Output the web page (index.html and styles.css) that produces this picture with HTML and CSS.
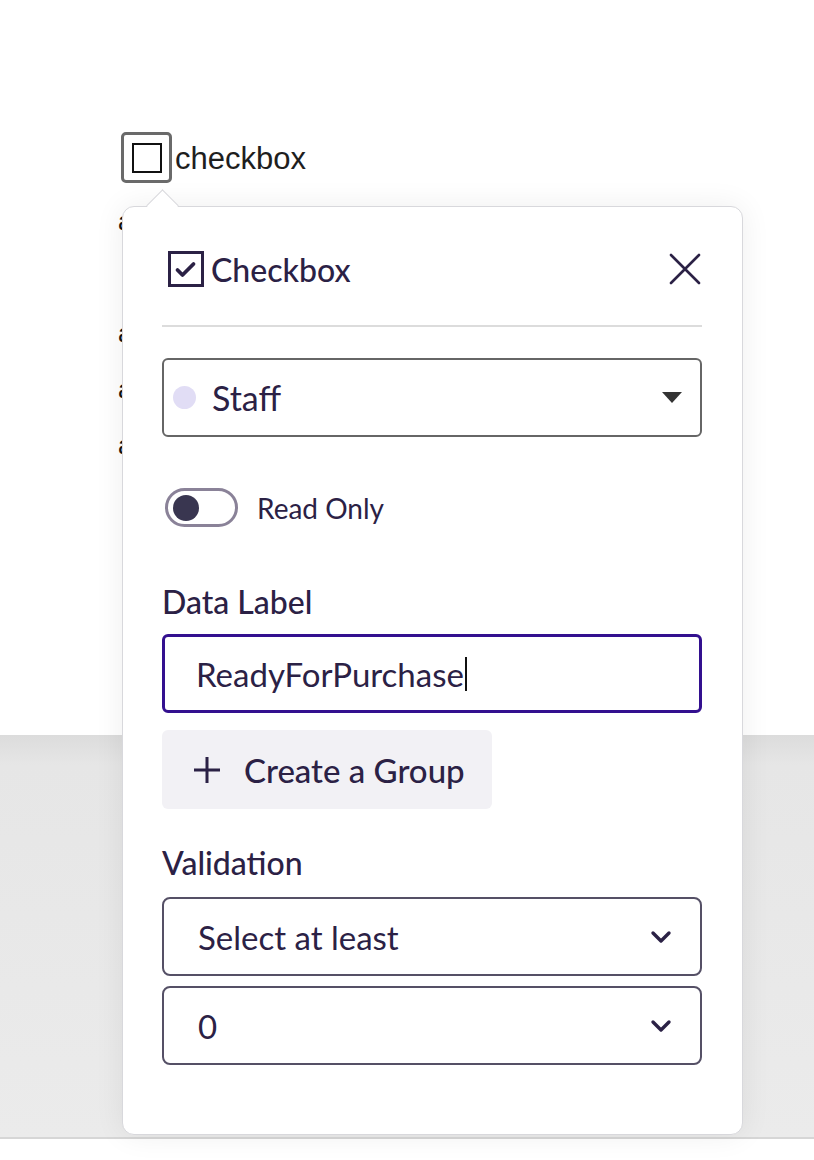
FILE: index.html
```html
<!DOCTYPE html>
<html lang="en">
<head>
    <meta charset="UTF-8">
    <meta name="viewport" content="width=device-width, initial-scale=1.0">
    <title>Checkbox field</title>
    <link rel="stylesheet" href="styles.css">
</head>
<body>
    <div class="doc">
        <div class="doc-top">
            <div class="field-row">
                <span class="field-box"><span class="field-box-inner"></span></span>
                <span class="field-text">checkbox</span>
            </div>
            <div class="behind-line first">a</div>
            <div class="behind-line">a</div>
            <div class="behind-line">a</div>
            <div class="behind-line">a</div>
        </div>
        <div class="doc-sheet"></div>
    </div>

    <div class="popover">
        <div class="popover-arrow"></div>
        <div class="popover-head">
            <svg class="head-icon" width="36" height="36" viewBox="0 0 36 36">
                <rect x="1.5" y="1.5" width="33" height="33" fill="none" stroke="#2b2145" stroke-width="3"/>
                <path d="M9.5 19 L14.5 24 L25.5 13" fill="none" stroke="#2b2145" stroke-width="3.8" stroke-linecap="round" stroke-linejoin="round"/>
            </svg>
            <span class="head-title">Checkbox</span>
            <svg class="close-icon" width="34" height="32" viewBox="0 0 34 32">
                <path d="M3 2 L31 30 M31 2 L3 30" stroke="#2b2145" stroke-width="2.6" stroke-linecap="round"/>
            </svg>
        </div>
        <div class="divider"></div>

        <div class="select select-role">
            <span class="role-dot"></span>
            <span class="select-text">Staff</span>
            <svg class="caret-down" width="20" height="11" viewBox="0 0 20 11">
                <path d="M0 0 H20 L10 11 Z" fill="#333"/>
            </svg>
        </div>

        <div class="toggle-row">
            <span class="toggle"><span class="toggle-knob"></span></span>
            <span class="toggle-label">Read Only</span>
        </div>

        <div class="section-label label-data">Data Label</div>
        <div class="text-input">ReadyForPurchase<span class="cursor"></span></div>

        <div class="group-btn">
            <svg width="30" height="30" viewBox="0 0 30 30">
                <path d="M15 2 V28 M2 15 H28" stroke="#2b2145" stroke-width="3"/>
            </svg>
            <span>Create a Group</span>
        </div>

        <div class="section-label label-validation">Validation</div>
        <div class="select select-plain">
            <span class="select-text">Select at least</span>
            <svg class="chevron" width="22" height="14" viewBox="0 0 22 14">
                <path d="M3 3 L11 11 L19 3" fill="none" stroke="#2b2145" stroke-width="3.4" stroke-linecap="round" stroke-linejoin="round"/>
            </svg>
        </div>
        <div class="select select-plain second">
            <span class="select-text">0</span>
            <svg class="chevron" width="22" height="14" viewBox="0 0 22 14">
                <path d="M3 3 L11 11 L19 3" fill="none" stroke="#2b2145" stroke-width="3.4" stroke-linecap="round" stroke-linejoin="round"/>
            </svg>
        </div>
    </div>
</body>
</html>
```

FILE: styles.css
```css
body {
    margin: 0;
    background: #ffffff;
    font-family: Lato, "Noto Sans", sans-serif;
    color: #2b2145;
}
.doc-top {
    height: 735px;
    background: #ffffff;
    padding: 132px 0 0 118px;
    box-sizing: border-box;
}
.doc-sheet {
    height: 402px;
    background: linear-gradient(#dcdcdc, #e6e6e6 30px, #ebebeb);
    border-bottom: 2px solid #d6d6d6;
}
.field-row {
    display: flex;
    align-items: center;
    height: 51px;
    padding-left: 3px;
}
.field-box {
    width: 51px;
    height: 51px;
    box-sizing: border-box;
    border: 3px solid #6a6a6a;
    border-radius: 5px;
    display: flex;
    align-items: center;
    justify-content: center;
}
.field-box-inner {
    width: 30px;
    height: 30px;
    box-sizing: border-box;
    border: 2px solid #111;
}
.field-text {
    font-family: "Liberation Sans", Arial, sans-serif;
    font-size: 31px;
    color: #1e1e1e;
    margin-left: 3px;
    position: relative;
    top: 1px;
}
.behind-line {
    font-family: "Liberation Sans", Arial, sans-serif;
    font-size: 26px;
    line-height: 56px;
    color: #111;
}
.behind-line.first {
    margin-top: 10px;
    margin-bottom: 56px;
}

.popover {
    position: absolute;
    left: 122px;
    top: 206px;
    width: 621px;
    height: 929px;
    box-sizing: border-box;
    background: #fff;
    border: 1px solid #d8d8dc;
    border-radius: 12px;
    box-shadow: 0 0 30px rgba(0, 0, 0, 0.07);
    padding: 42px 40px 0 39px;
}
.popover-arrow {
    position: absolute;
    left: 28px;
    top: -13px;
    width: 22px;
    height: 22px;
    background: #fff;
    border-left: 1px solid #d8d8dc;
    border-top: 1px solid #d8d8dc;
    transform: rotate(45deg);
}
.popover-head {
    display: flex;
    align-items: center;
    height: 40px;
}
.head-icon {
    margin-left: 6px;
}
.head-title {
    font-size: 32px;
    font-weight: 500;
    margin-left: 7px;
    flex: 1;
}
.divider {
    height: 2px;
    background: #dcdcdc;
    margin-top: 36px;
}
.select {
    height: 79px;
    box-sizing: border-box;
    border: 2px solid #666;
    border-radius: 6px;
    display: flex;
    align-items: center;
}
.select-role {
    margin-top: 31px;
    padding: 0 18px 0 9px;
}
.role-dot {
    width: 23px;
    height: 23px;
    border-radius: 50%;
    background: #e1ddf5;
}
.select-text {
    font-size: 33px;
    flex: 1;
    margin-left: 17px;
}
.select-role .select-text {
    font-size: 34px;
    margin-left: 16px;
}
.toggle-row {
    display: flex;
    align-items: center;
    margin-top: 51px;
    height: 39px;
    padding-left: 3px;
}
.toggle {
    width: 73px;
    height: 39px;
    box-sizing: border-box;
    border: 3px solid #8a8298;
    border-radius: 20px;
    display: flex;
    align-items: center;
    padding-left: 5px;
}
.toggle-knob {
    width: 26px;
    height: 26px;
    border-radius: 50%;
    background: #393650;
}
.toggle-label {
    font-size: 28px;
    margin-left: 19px;
}
.section-label {
    font-size: 32px;
    font-weight: 500;
    line-height: 36px;
}
.label-data {
    margin-top: 57px;
}
.text-input {
    margin-top: 14px;
    height: 79px;
    box-sizing: border-box;
    border: 3px solid #33108f;
    border-radius: 6px;
    display: flex;
    align-items: center;
    padding-left: 31px;
    font-size: 33px;
}
.cursor {
    width: 2px;
    height: 34px;
    background: #111;
    margin-left: 1px;
}
.group-btn {
    margin-top: 17px;
    width: 330px;
    height: 79px;
    background: #f2f1f5;
    border-radius: 6px;
    display: flex;
    align-items: center;
    padding-left: 30px;
    box-sizing: border-box;
    font-size: 33px;
    font-weight: 500;
}
.group-btn span {
    margin-left: 22px;
}
.label-validation {
    margin-top: 36px;
}
.select-plain {
    margin-top: 16px;
    border-color: #555066;
    border-radius: 8px;
    padding: 0 28px 0 17px;
}
.select-plain.second {
    margin-top: 10px;
}
```
